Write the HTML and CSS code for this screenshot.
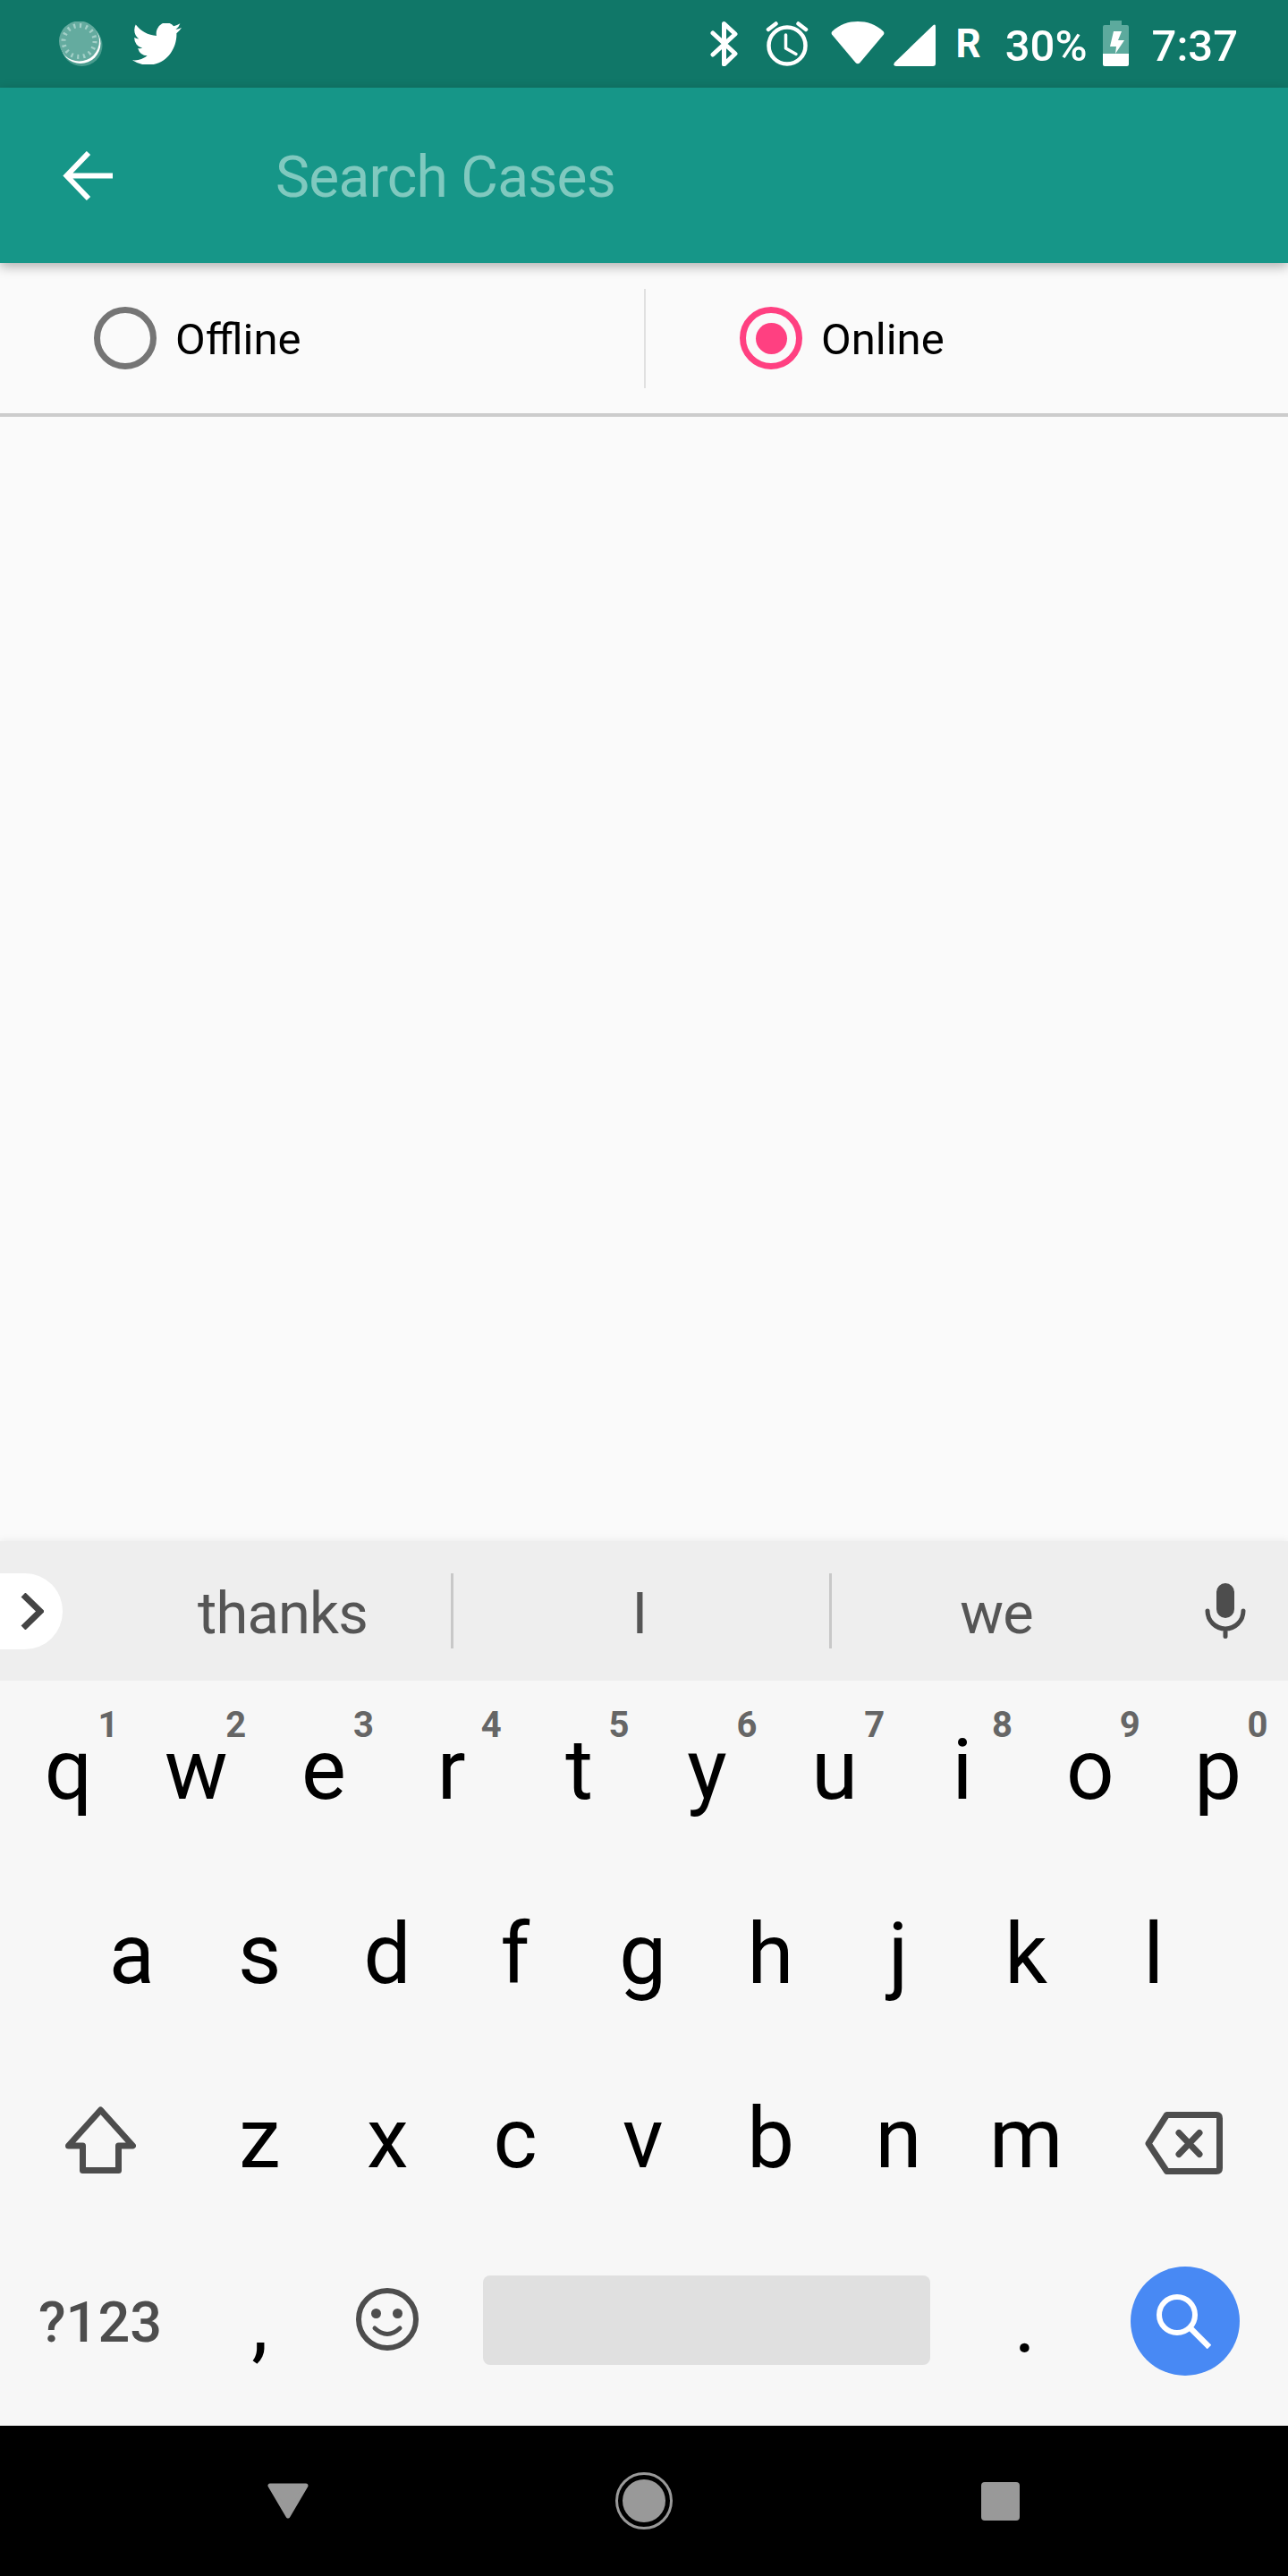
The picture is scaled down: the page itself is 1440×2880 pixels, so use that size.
FILE: index.html
```html
<!DOCTYPE html>
<html lang="en">
<head>
    <meta charset="UTF-8">
    <meta name="viewport" content="width=device-width, initial-scale=1.0">
    <title>Search Cases</title>
    <link rel="stylesheet" href="styles.css">
</head>
<body>
    <div class="phone">
        <!-- Status bar -->
        <div class="status-bar">
            <svg class="icon-sync" viewBox="0 0 49 50">
                <circle cx="25.5" cy="27" r="23" fill="#4a9c8e"/>
                <circle cx="24" cy="24.5" r="22.5" fill="#fff"/>
                <circle cx="22.5" cy="22" r="22.5" fill="#64ab9f"/>
                <circle cx="22.5" cy="22" r="17.5" fill="none" stroke="#a3d0c8" stroke-width="5" stroke-dasharray="2.2 4.67"/>
            </svg>
            <svg class="icon-twitter" viewBox="0 2.5 24 19" preserveAspectRatio="none">
                <path fill="#fff" d="M23.953 4.57a10 10 0 01-2.825.775 4.958 4.958 0 002.163-2.723c-.951.555-2.005.959-3.127 1.184a4.92 4.92 0 00-8.384 4.482C7.69 8.095 4.067 6.13 1.64 3.162a4.822 4.822 0 00-.666 2.475c0 1.71.87 3.213 2.188 4.096a4.904 4.904 0 01-2.228-.616v.06a4.923 4.923 0 003.946 4.827 4.996 4.996 0 01-2.212.085 4.936 4.936 0 004.604 3.417 9.867 9.867 0 01-6.102 2.105c-.39 0-.779-.023-1.17-.067a13.995 13.995 0 007.557 2.209c9.053 0 13.998-7.496 13.998-13.985 0-.21 0-.42-.015-.63A9.935 9.935 0 0024 4.59z"/>
            </svg>
            <svg class="icon-bluetooth" viewBox="0 0 31 50">
                <path fill="none" stroke="#fff" stroke-width="5" stroke-linecap="round" stroke-linejoin="round" d="M3 13 L28 36 L15.5 48 V2.5 L28 14 L3 37"/>
            </svg>
            <svg class="icon-alarm" viewBox="0 0 48 50">
                <circle cx="24" cy="27" r="20.5" fill="none" stroke="#fff" stroke-width="4.5"/>
                <path fill="none" stroke="#fff" stroke-width="3.5" stroke-linecap="round" stroke-linejoin="round" d="M22.5 15 V30 L34 36.5"/>
                <path fill="none" stroke="#fff" stroke-width="4.5" stroke-linecap="round" d="M3 9 L11.5 2.5 M45 9 L36.5 2.5"/>
            </svg>
            <svg class="icon-wifi" viewBox="0 0 60 48">
                <path fill="#fff" d="M1.5 11 C10 3 20 0 30 0 C40 0 50 3 58.5 11 Q60 12.5 59 14.5 L32.5 46 Q30 48.5 27.5 46 L1 14.5 Q0 12.5 1.5 11Z"/>
            </svg>
            <svg class="icon-signal" viewBox="0 0 47 47">
                <path fill="#fff" d="M44 1.5 Q47 -1 47 3 V44 Q47 47 44 47 H3 Q-1 47 1 43 Z"/>
            </svg>
            <span class="status-roaming">R</span>
            <span class="status-text status-percent">30%</span>
            <svg class="icon-battery" viewBox="0 0 29 51">
                <path fill="#5caa9d" d="M8 0 H21 V5 H27 Q29 5 29 7 V37 H0 V7 Q0 5 2 5 H8Z"/>
                <path fill="#fff" d="M0 37 H29 V49 Q29 51 27 51 H2 Q0 51 0 49Z"/>
                <polygon fill="#fff" points="12,12 21,12 17,22 24,22 14,37 15,29 8,29"/>
            </svg>
            <span class="status-text status-time">7:37</span>
        </div>

        <!-- Search bar -->
        <div class="app-bar">
            <svg class="icon-back" viewBox="0 0 56 55">
                <path fill="none" stroke="#fff" stroke-width="6" d="M56 27.5 H5 M29 2 L4.5 27.5 L29 53"/>
            </svg>
            <span class="search-hint">Search Cases</span>
        </div>

        <!-- Offline / online switch -->
        <div class="mode-row">
            <label class="mode-option">
                <span class="radio"></span>
                <span class="mode-label">Offline</span>
            </label>
            <label class="mode-option mode-option-right">
                <span class="radio radio-on"><span class="radio-dot"></span></span>
                <span class="mode-label">Online</span>
            </label>
        </div>

        <div class="content"></div>

        <!-- Keyboard -->
        <div class="suggestions">
            <div class="suggest-pill">
                <svg class="icon-chevron" viewBox="0 0 26 41">
                    <path fill="none" stroke="#444" stroke-width="7" d="M3 2 L22 20.5 L3 39"/>
                </svg>
            </div>
            <span class="suggest-word suggest-first">thanks</span>
            <span class="suggest-sep"></span>
            <span class="suggest-word suggest-second">I</span>
            <span class="suggest-sep"></span>
            <span class="suggest-word suggest-third">we</span>
            <div class="suggest-mic">
                <svg class="icon-mic" viewBox="0 0 46 62">
                    <rect x="13" y="0" width="20" height="39" rx="10" fill="#4d4d4d"/>
                    <path fill="none" stroke="#4d4d4d" stroke-width="5" stroke-linecap="round" d="M3 31 A20 20 0 0 0 43 31 M23 51 V59.5"/>
                </svg>
            </div>
        </div>

        <div class="keyboard">
            <div class="key-row">
                <div class="key">q<span class="key-num">1</span></div>
                <div class="key">w<span class="key-num">2</span></div>
                <div class="key">e<span class="key-num">3</span></div>
                <div class="key">r<span class="key-num">4</span></div>
                <div class="key">t<span class="key-num">5</span></div>
                <div class="key">y<span class="key-num">6</span></div>
                <div class="key">u<span class="key-num">7</span></div>
                <div class="key">i<span class="key-num">8</span></div>
                <div class="key">o<span class="key-num">9</span></div>
                <div class="key">p<span class="key-num">0</span></div>
            </div>
            <div class="key-row key-row-home">
                <div class="key">a</div>
                <div class="key">s</div>
                <div class="key">d</div>
                <div class="key">f</div>
                <div class="key">g</div>
                <div class="key">h</div>
                <div class="key">j</div>
                <div class="key">k</div>
                <div class="key">l</div>
            </div>
            <div class="key-row">
                <div class="key key-wide">
                    <svg class="icon-shift" viewBox="0 0 79 75">
                        <path fill="none" stroke="#4d4d4d" stroke-width="7" stroke-linejoin="round" d="M39.5 4 L75.5 44 H59.5 V71.5 H19.5 V44 H3.5 Z"/>
                    </svg>
                </div>
                <div class="key">z</div>
                <div class="key">x</div>
                <div class="key">c</div>
                <div class="key">v</div>
                <div class="key">b</div>
                <div class="key">n</div>
                <div class="key">m</div>
                <div class="key key-wide">
                    <svg class="icon-backspace" viewBox="0 0 87 70">
                        <path fill="none" stroke="#4d4d4d" stroke-width="7" stroke-linejoin="round" d="M4 35.5 L24.5 3.5 H80 Q83.5 3.5 83.5 7.5 V63 Q83.5 66.5 80 66.5 H24.5 Z"/>
                        <path fill="none" stroke="#4d4d4d" stroke-width="7" stroke-linecap="round" d="M38 23.5 L61 47.5 M61 23.5 L38 47.5"/>
                    </svg>
                </div>
            </div>
            <div class="key-row">
                <div class="key key-wide key-symbols">?123</div>
                <div class="key">,</div>
                <div class="key">
                    <svg class="icon-emoji" viewBox="0 0 70 70">
                        <circle cx="35" cy="35" r="32" fill="none" stroke="#4d4d4d" stroke-width="6"/>
                        <circle cx="22.5" cy="28.5" r="5.5" fill="#4d4d4d"/>
                        <circle cx="46.5" cy="28.5" r="5.5" fill="#4d4d4d"/>
                        <path fill="none" stroke="#4d4d4d" stroke-width="5" stroke-linecap="round" d="M21 45 Q35 58 49 45"/>
                    </svg>
                </div>
                <div class="key key-space"><span class="space-bar"></span></div>
                <div class="key">.</div>
                <div class="key key-wide">
                    <span class="search-key">
                        <svg class="icon-search" viewBox="0 0 61 61">
                            <circle cx="23" cy="23" r="20" fill="none" stroke="#fff" stroke-width="6"/>
                            <path fill="none" stroke="#fff" stroke-width="6.5" d="M37 37 L59 59"/>
                        </svg>
                    </span>
                </div>
            </div>
        </div>

        <!-- Navigation bar -->
        <div class="nav-bar">
            <div class="nav-item">
                <svg class="icon-nav-back" viewBox="0 0 46 40">
                    <polygon points="3,3 43,3 23,37" fill="#999" stroke="#999" stroke-width="5" stroke-linejoin="round"/>
                </svg>
            </div>
            <div class="nav-item"><span class="nav-home"><span class="nav-home-disc"></span></span></div>
            <div class="nav-item"><span class="nav-recent"></span></div>
        </div>
    </div>
</body>
</html>
```

FILE: styles.css
```css
body {
    margin: 0;
    font-family: Roboto, "Liberation Sans", sans-serif;
    background-color: #fafafa;
}

.phone {
    width: 1440px;
    height: 2880px;
    display: flex;
    flex-direction: column;
    overflow: hidden;
}

/* status bar */
.status-bar {
    height: 98px;
    flex: none;
    display: flex;
    align-items: center;
    padding: 0 56px 0 66px;
    background-color: #107768;
    color: white;
}

.status-bar svg {
    display: block;
    flex: none;
}

.icon-sync {
    width: 49px;
    height: 50px;
}

.icon-twitter {
    width: 55px;
    height: 46px;
    margin-left: 33px;
}

.icon-bluetooth {
    width: 31px;
    height: 50px;
    margin-left: auto;
}

.icon-alarm {
    width: 48px;
    height: 50px;
    margin-left: 31px;
}

.icon-wifi {
    width: 60px;
    height: 48px;
    margin-left: 25px;
    margin-bottom: 2px;
}

.icon-signal {
    width: 47px;
    height: 47px;
    margin-left: 10px;
    margin-top: 3px;
}

.status-roaming {
    font-size: 44px;
    font-weight: 700;
    letter-spacing: -1px;
    margin-left: 23px;
}

.status-text {
    font-size: 49px;
    font-weight: 500;
    margin-top: 4px;
}

.status-percent {
    margin-left: 28px;
}

.icon-battery {
    width: 29px;
    height: 51px;
    margin-left: 17px;
    margin-bottom: 1px;
}

.status-time {
    margin-left: 26px;
}

/* app bar */
.app-bar {
    height: 196px;
    flex: none;
    display: flex;
    align-items: center;
    padding-left: 70px;
    background-color: #169688;
    box-shadow: 0 4px 12px rgba(0, 0, 0, 0.3);
    position: relative;
}

.icon-back {
    width: 56px;
    height: 55px;
    flex: none;
}

.search-hint {
    margin-left: 182px;
    font-size: 64px;
    letter-spacing: -0.75px;
    color: #80c9bf;
    margin-top: 4px;
}

/* offline / online row */
.mode-row {
    height: 168px;
    flex: none;
    display: flex;
    align-items: center;
    border-bottom: 4px solid #cccccc;
}

.mode-option {
    width: 720px;
    height: 111px;
    box-sizing: border-box;
    display: flex;
    align-items: center;
    padding-left: 105px;
}

.mode-option-right {
    border-left: 2px solid #e0e0e0;
    padding-left: 105px;
}

.radio {
    width: 70px;
    height: 70px;
    box-sizing: border-box;
    border: 7px solid #757575;
    border-radius: 50%;
    display: flex;
    align-items: center;
    justify-content: center;
}

.radio-on {
    border-color: #ff4081;
}

.radio-dot {
    width: 35px;
    height: 35px;
    border-radius: 50%;
    background-color: #ff4081;
}

.mode-label {
    margin-left: 21px;
    font-size: 49px;
    color: black;
    margin-top: 3px;
}

.content {
    flex: 1;
}

/* suggestion strip */
.suggestions {
    height: 156px;
    flex: none;
    display: flex;
    align-items: center;
    background-color: #eeeeee;
    box-shadow: 0 -2px 8px rgba(0, 0, 0, 0.05);
    position: relative;
    padding-top: 6px;
    box-sizing: border-box;
}

.suggest-pill {
    width: 70px;
    height: 85px;
    flex: none;
    display: flex;
    align-items: center;
    background-color: white;
    border-radius: 0 42px 42px 0;
    margin-top: -6px;
    padding-left: 23px;
    box-sizing: border-box;
    margin-right: 58px;
}

.icon-chevron {
    width: 26px;
    height: 41px;
}

.suggest-word {
    font-size: 65px;
    letter-spacing: -0.8px;
    color: #555555;
    text-align: center;
    flex: none;
    box-sizing: border-box;
}

.suggest-first {
    width: 376px;
}

.suggest-second {
    width: 420px;
    padding-right: 4px;
}

.suggest-third {
    width: 368px;
}

.suggest-sep {
    width: 3px;
    height: 84px;
    flex: none;
    margin-top: -6px;
    background-color: #c8c8c8;
}

.suggest-mic {
    flex: 1;
    display: flex;
    justify-content: center;
    margin-top: -6px;
}

.icon-mic {
    width: 46px;
    height: 62px;
    margin-left: 2px;
}

/* keyboard */
.keyboard {
    height: 833px;
    flex: none;
    box-sizing: border-box;
    padding-bottom: 9px;
    background-color: #f7f7f7;
    position: relative;
}

.key-row {
    height: 206px;
    display: flex;
    padding: 0 5px;
}

.key-row-home {
    padding-left: 76px;
}

.key {
    flex: 0 0 142.8px;
    position: relative;
    box-sizing: border-box;
    padding-bottom: 6px;
    display: flex;
    align-items: center;
    justify-content: center;
    font-size: 94px;
    color: black;
}

.key-wide {
    flex-basis: 214px;
}

.key-num {
    position: absolute;
    top: 30px;
    left: 50%;
    margin-left: 24px;
    width: 40px;
    text-align: center;
    font-size: 40px;
    line-height: 40px;
    font-weight: 700;
    letter-spacing: -1px;
    color: #666666;
}

.key-symbols {
    font-size: 63px;
    font-weight: 500;
    color: #4d4d4d;
    padding-bottom: 7px;
}

.key-space {
    flex-basis: 570px;
    padding-bottom: 12px;
}

.space-bar {
    width: 500px;
    height: 100px;
    border-radius: 8px;
    background-color: #e0e0e0;
}

.icon-shift {
    width: 79px;
    height: 75px;
    margin-top: 3px;
}

.icon-backspace {
    width: 87px;
    height: 70px;
    margin-top: 10px;
    margin-right: 4px;
}

.icon-emoji {
    width: 70px;
    height: 70px;
    margin-bottom: 8px;
}

.search-key {
    width: 122px;
    height: 122px;
    border-radius: 50%;
    background-color: #4889f4;
    display: flex;
    align-items: center;
    justify-content: center;
    margin-bottom: 4px;
    margin-left: 2px;
}

.icon-search {
    width: 61px;
    height: 61px;
    margin-right: 3px;
}

/* navigation bar */
.nav-bar {
    height: 168px;
    flex: none;
    display: grid;
    grid-template-columns: repeat(3, 398px);
    justify-content: center;
    align-items: center;
    background-color: black;
}

.nav-item {
    display: flex;
    justify-content: center;
    align-items: center;
}

.icon-nav-back {
    width: 46px;
    height: 40px;
    margin-left: -1px;
}

.nav-home {
    width: 64px;
    height: 64px;
    box-sizing: border-box;
    border: 3px solid #999999;
    border-radius: 50%;
    padding: 5px;
    display: block;
}

.nav-home-disc {
    display: block;
    width: 100%;
    height: 100%;
    border-radius: 50%;
    background-color: #999999;
}

.nav-recent {
    width: 43px;
    height: 43px;
    border-radius: 4px;
    background-color: #999999;
}
```
